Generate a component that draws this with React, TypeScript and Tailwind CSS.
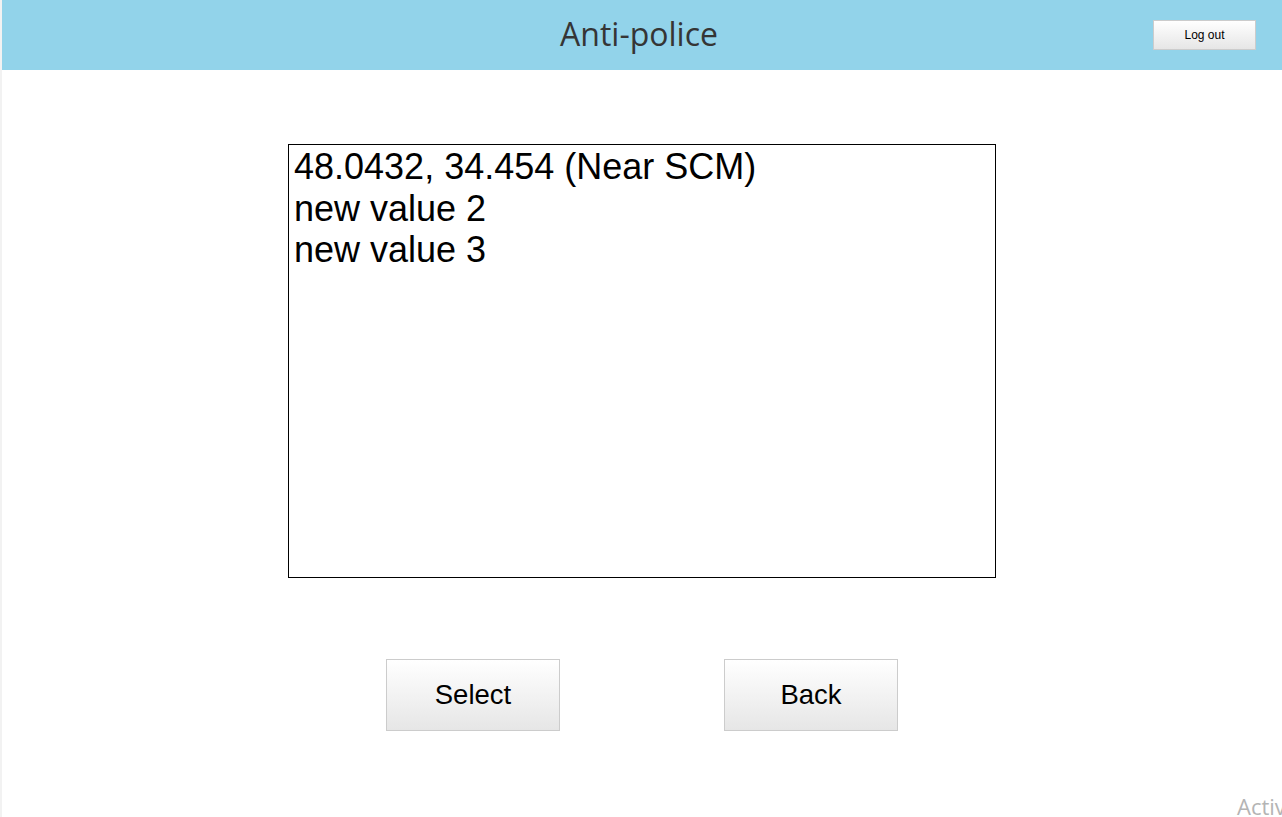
import React from "react";

const values = ["48.0432, 34.454 (Near SCM)", "new value 2", "new value 3"];

const App = () => {
  return (
    <div className="relative h-[817px] w-[1282px] overflow-hidden bg-white pl-[2px]">
      <div className="absolute left-0 top-0 h-full w-[2px] bg-[#f2f2f2]" />

      <header className="relative flex h-[70px] items-center justify-center bg-[#92d3ea]">
        <h1 className="mr-[6px] mt-[-3px] text-[32px] leading-none text-[#353535] [font-family:'Open_Sans',sans-serif]">
          Anti-police
        </h1>
        <button className="absolute left-[1151px] top-[20px] flex h-[30px] w-[103px] items-center justify-center border border-[#cccccc] bg-gradient-to-b from-white to-[#e6e6e6] text-[12px] text-black [font-family:'Liberation_Sans',Arial,sans-serif]">
          Log out
        </button>
      </header>

      <div className="flex flex-col items-center">
        <div className="mt-[74px] h-[434px] w-[708px] border border-black px-[5px] pt-[1px] text-[36px] text-black [font-family:'Liberation_Sans',Arial,sans-serif]">
          {values.map((v) => (
            <div key={v} className="leading-[41.5px]">
              {v}
            </div>
          ))}
        </div>

        <div className="mt-[81px] flex gap-[164px]">
          <button className="flex h-[72px] w-[174px] items-center justify-center border border-[#cccccc] bg-gradient-to-b from-white to-[#e6e6e6] text-[27.5px] text-black [font-family:'Liberation_Sans',Arial,sans-serif]">
            Select
          </button>
          <button className="flex h-[72px] w-[174px] items-center justify-center border border-[#cccccc] bg-gradient-to-b from-white to-[#e6e6e6] text-[27.5px] text-black [font-family:'Liberation_Sans',Arial,sans-serif]">
            Back
          </button>
        </div>
      </div>

      <div className="absolute left-[1237px] top-[795px] whitespace-nowrap text-[22px] leading-none text-[#b4b4b4] [font-family:'Open_Sans',sans-serif]">
        Activate Windows
      </div>
    </div>
  );
};

export default App;
